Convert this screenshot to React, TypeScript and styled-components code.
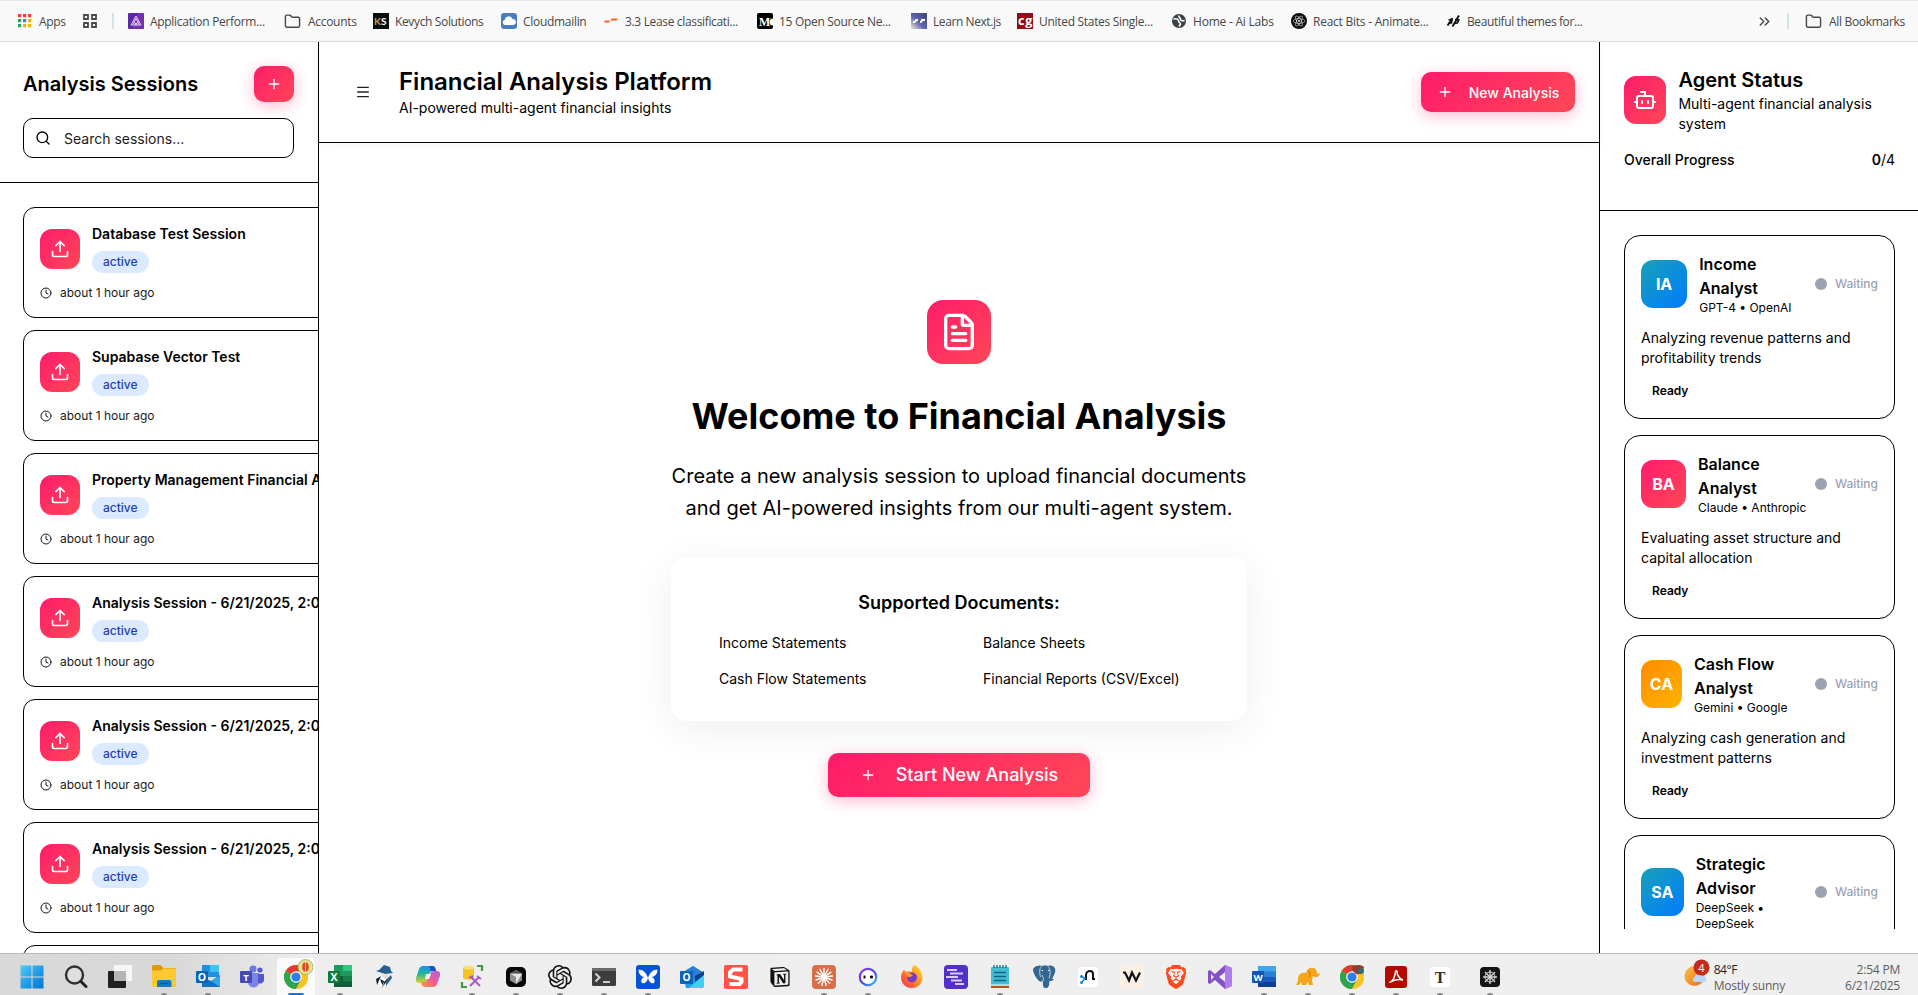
import React from 'react';
import styled, { createGlobalStyle } from 'styled-components';
import { Bot, ChevronsRight, Clock, FileText, Folder, Menu, Plus, Search, Upload } from 'lucide-react';
import { SiBrave, SiNotion, SiOpenai, SiReact } from 'react-icons/si';

const pink = 'linear-gradient(135deg, #ff1b6b 0%, #ff4757 100%)';
const blue = 'linear-gradient(135deg, #17a2b8 0%, #007bff 100%)';
const orange = 'linear-gradient(135deg, #ff8c00 0%, #ffb300 100%)';

const GlobalStyle = createGlobalStyle`
  *, *::before, *::after { box-sizing: border-box; }
  body { margin: 0; background: #fff; color: #000; font-family: Inter, sans-serif; overflow: hidden; }
  h1, h2, h3, p { margin: 0; }
  button, input { font-family: inherit; }
  svg { display: block; flex: none; }
`;

const Screen = styled.div`
  display: flex;
  flex-direction: column;
  width: 1918px;
  height: 995px;
  overflow: hidden;
`;

/* ---------- Bookmarks bar ---------- */

const BookmarksBar = styled.nav`
  display: flex;
  align-items: center;
  flex: none;
  height: 42px;
  padding: 0 13px 0 18px;
  background: #f9f9f9;
  border-top: 1px solid #e6e6e6;
  border-bottom: 1px solid #dcdcdc;
  color: #474747;
  font: 12px 'Open Sans', sans-serif;
  letter-spacing: -0.3px;
  white-space: nowrap;
`;

const Bookmark = styled.div<{ $width?: number; $gap?: number; $track?: number }>`
  display: flex;
  align-items: center;
  gap: ${(p) => p.$gap ?? 6}px;
  flex: none;
  width: ${(p) => (p.$width ? `${p.$width}px` : 'auto')};
  letter-spacing: ${(p) => p.$track ?? -0.3}px;
`;

const BarDivider = styled.span<{ $left: number; $right: number }>`
  width: 2px;
  height: 16px;
  margin: 0 ${(p) => p.$right}px 0 ${(p) => p.$left}px;
  background: #d3e3ea;
`;

const BarSpacer = styled.span`
  flex: 1;
`;

/* ---------- Page shell ---------- */

const Workspace = styled.div`
  display: flex;
  flex: 1;
  min-height: 0;
`;

const Sidebar = styled.aside`
  display: flex;
  flex-direction: column;
  flex: none;
  width: 319px;
  border-right: 1px solid #000;
  overflow: hidden;
`;

const SidebarHeader = styled.div`
  flex: none;
  padding: 24px 24px 24px 23px;
  border-bottom: 1px solid #000;
`;

const SidebarTitleRow = styled.div`
  display: flex;
  align-items: center;
  justify-content: space-between;
  margin-bottom: 16px;
`;

const PanelTitle = styled.h2`
  font-size: 20px;
  line-height: 28px;
  font-weight: 600;
`;

const GradientButton = styled.button<{ $w: number; $h: number; $size?: number; $gap?: number }>`
  display: flex;
  align-items: center;
  justify-content: center;
  gap: ${(p) => p.$gap ?? 16}px;
  width: ${(p) => p.$w}px;
  height: ${(p) => p.$h}px;
  padding: 0;
  border: 0;
  border-radius: 10px;
  background: ${pink};
  box-shadow: 0 4px 15px rgba(255, 27, 107, 0.3);
  color: #fff;
  font-size: ${(p) => p.$size ?? 14}px;
  font-weight: 500;
  white-space: nowrap;
`;

const SearchField = styled.label`
  display: flex;
  align-items: center;
  gap: 13px;
  height: 40px;
  padding: 0 11px;
  border: 1px solid #000;
  border-radius: 10px;
`;

const SearchInput = styled.input`
  flex: 1;
  min-width: 0;
  padding: 0;
  border: 0;
  outline: 0;
  background: none;
  font-size: 14px;
  &::placeholder { color: #1c1c1c; opacity: 1; }
`;

const SessionList = styled.div`
  display: flex;
  flex-direction: column;
  gap: 12px;
  flex: 1;
  min-height: 0;
  padding: 24px 0 0 23px;
  overflow: hidden;
`;

const SessionCard = styled.article`
  flex: none;
  width: 420px;
  height: 111px;
  padding: 16px;
  border: 1px solid #000;
  border-radius: 12px;
`;

const SessionTop = styled.div`
  display: flex;
  gap: 12px;
  height: 49px;
  margin-bottom: 12px;
`;

const SessionIcon = styled.span`
  display: grid;
  place-items: center;
  width: 40px;
  height: 40px;
  margin-top: 5px;
  border-radius: 12px;
  background: ${pink};
  color: #fff;
`;

const SessionInfo = styled.div`
  display: flex;
  flex-direction: column;
  align-items: flex-start;
  gap: 7px;
`;

const SessionTitle = styled.h3`
  font-size: 14px;
  line-height: 20px;
  font-weight: 600;
  white-space: nowrap;
`;

const StatusBadge = styled.span`
  display: flex;
  align-items: center;
  height: 22px;
  padding: 0 11px;
  border-radius: 11px;
  background: #dbeafe;
  color: #1e40af;
  font-size: 12px;
  line-height: 16px;
  font-weight: 500;
`;

const SessionTime = styled.div`
  display: flex;
  align-items: center;
  gap: 8px;
  font-size: 12px;
  line-height: 16px;
  color: #1a1a1a;
`;

/* ---------- Main column ---------- */

const Main = styled.main`
  display: flex;
  flex-direction: column;
  flex: 1;
  min-width: 0;
`;

const MainHeader = styled.header`
  display: flex;
  align-items: center;
  flex: none;
  height: 101px;
  padding: 0 24px;
  border-bottom: 1px solid #000;
  box-shadow: 0 2px 10px rgba(0, 0, 0, 0.05);
`;

const MenuButton = styled.button`
  display: grid;
  place-items: center;
  width: 40px;
  height: 40px;
  margin-right: 16px;
  padding: 0;
  border: 0;
  background: none;
  color: #222;
`;

const HeaderText = styled.div`
  flex: 1;
`;

const AppTitle = styled.h1`
  font-size: 24px;
  line-height: 32px;
  font-weight: 600;
`;

const SmallText = styled.p`
  font-size: 14px;
  line-height: 20px;
`;

const Welcome = styled.section`
  display: flex;
  flex-direction: column;
  align-items: center;
  justify-content: center;
  flex: 1;
`;

const HeroIcon = styled.div`
  display: grid;
  place-items: center;
  width: 64px;
  height: 64px;
  margin-bottom: 32px;
  border-radius: 16px;
  background: ${pink};
  color: #fff;
`;

const WelcomeTitle = styled.h2`
  margin-bottom: 24px;
  font-size: 36px;
  line-height: 40px;
  font-weight: 700;
`;

const WelcomeText = styled.p`
  width: 576px;
  margin-bottom: 33px;
  font-size: 20px;
  line-height: 32px;
  text-align: center;
`;

const DocumentsCard = styled.div`
  width: 576px;
  height: 164px;
  margin-bottom: 32px;
  padding: 32px 48px;
  border-radius: 16px;
  background: #fff;
  box-shadow: 0 8px 40px rgba(15, 20, 40, 0.07);
`;

const DocumentsTitle = styled.h3`
  margin-bottom: 16px;
  font-size: 18px;
  line-height: 28px;
  font-weight: 600;
  text-align: center;
`;

const DocumentsGrid = styled.div`
  display: grid;
  grid-template-columns: 216px 216px;
  gap: 16px 48px;
  font-size: 14px;
  line-height: 20px;
`;

/* ---------- Agent panel ---------- */

const AgentPanel = styled.aside`
  display: flex;
  flex-direction: column;
  flex: none;
  width: 319px;
  padding-bottom: 24px;
  border-left: 1px solid #000;
`;

const AgentHeader = styled.div`
  flex: none;
  height: 169px;
  padding: 24px 23px 0 24px;
  border-bottom: 1px solid #000;
`;

const AgentHeading = styled.div`
  display: flex;
  align-items: center;
  gap: 12.4px;
  margin-bottom: 16px;
`;

const AgentBadge = styled.span<{ $w: number; $fill: string }>`
  display: grid;
  place-items: center;
  flex: none;
  width: ${(p) => p.$w}px;
  height: 48px;
  border-radius: 12px;
  background: ${(p) => p.$fill};
  color: #fff;
  font-size: 16px;
  font-weight: 700;
`;

const ProgressRow = styled.div`
  display: flex;
  justify-content: space-between;
  font-size: 14px;
  line-height: 20px;
  font-weight: 500;
`;

const ProgressCount = styled.span`
  font-weight: 400;
  b { font-weight: 600; }
`;

const AgentList = styled.div`
  display: flex;
  flex-direction: column;
  gap: 16px;
  flex: 1;
  min-height: 0;
  padding: 24px 23px 0 24px;
  overflow: hidden;
`;

const AgentCard = styled.article`
  flex: none;
  padding: 16px;
  border: 1px solid #000;
  border-radius: 16px;
`;

const AgentTop = styled.div`
  display: flex;
  align-items: center;
  gap: 12px;
  margin-bottom: 12px;
`;

const AgentInfo = styled.div`
  flex: 1;
  min-width: 0;
`;

const AgentName = styled.h3`
  font-size: 16px;
  line-height: 24px;
  font-weight: 600;
  white-space: pre-line;
`;

const AgentModel = styled.p`
  font-size: 12px;
  line-height: 16px;
  white-space: pre;
`;

const AgentState = styled.span`
  display: flex;
  align-items: center;
  gap: 8px;
  color: #9ca3af;
  font-size: 12px;
  line-height: 16px;
  font-weight: 500;
  &::before {
    content: '';
    width: 12px;
    height: 12px;
    border-radius: 50%;
    background: #9ca3af;
  }
`;

const ReadyTag = styled.div`
  margin-top: 12px;
  padding: 0 11px;
  font-size: 12px;
  line-height: 22px;
  font-weight: 600;
`;

/* ---------- Taskbar ---------- */

const Taskbar = styled.footer`
  display: flex;
  flex: none;
  height: 42px;
  padding: 0 18px 0 10px;
  border-top: 1px solid #b9b9b9;
  background: linear-gradient(90deg, #d9d9d9 0, #d8d8d8 170px, #eeeeee 310px, #efefef 100%);
  font-family: 'Open Sans', sans-serif;
  font-size: 12px;
`;

const TaskItem = styled.div<{ $active?: boolean; $running?: boolean; $wide?: boolean }>`
  display: flex;
  flex-direction: column;
  align-items: center;
  justify-content: space-between;
  width: 38px;
  height: 38px;
  margin: 4px ${(p) => (p.$wide ? 9 : 3)}px 0 3px;
  padding-top: 7px;
  border-radius: 4px 4px 0 0;
  background: ${(p) => (p.$active ? '#fafafa' : 'transparent')};
  &::after {
    content: '';
    width: ${(p) => (p.$active ? 16 : 6)}px;
    height: 3px;
    border-radius: 2px 2px 0 0;
    background: ${(p) => (p.$active ? '#0a78d4' : p.$running ? '#8b8b8b' : 'transparent')};
  }
`;

const Weather = styled.div`
  display: flex;
  align-items: flex-start;
  gap: 4px;
  margin-left: auto;
  padding-top: 5px;
`;

const TrayText = styled.div<{ $right?: boolean; $track: number }>`
  padding-top: 3px;
  line-height: 16px;
  color: #5d5d5d;
  letter-spacing: ${(p) => p.$track}px;
  text-align: ${(p) => (p.$right ? 'right' : 'left')};
  white-space: nowrap;
`;

const Temperature = styled.div`
  color: #1f1f1f;
  letter-spacing: -0.4px;
`;

const Clockface = styled.div`
  width: 115px;
  padding-top: 5px;
`;

/* ---------- Bookmark glyphs ---------- */

const G16 = ({ children }: { children: React.ReactNode }) => (
  <svg width="16" height="16" viewBox="0 0 16 16">{children}</svg>
);

const appDots = ['#f44336', '#f44336', '#f44336', '#34a060', '#2a8cf0', '#f4b400', '#34a060', '#f4b400', '#f4b400'];

const AppsGlyph = () => (
  <svg width="14" height="14" viewBox="0 0 14 14">
    {appDots.map((c, i) => (
      <rect key={i} x={(i % 3) * 5} y={Math.floor(i / 3) * 5} width="3.2" height="3.2" fill={c} />
    ))}
  </svg>
);

const GridGlyph = () => (
  <svg width="14" height="14" viewBox="0 0 14 14" fill="none" stroke="#4a4a4a" strokeWidth="1.8">
    <path d="M1 1h4v4h-4zM9 1h4v4h-4zM1 9h4v4h-4zM9 9h4v4h-4z" />
  </svg>
);

const glyphs = {
  perf: (
    <G16>
      <rect width="16" height="16" rx="1" fill="#5b2aa0" />
      <path d="M10 0h6v16h-12z" fill="#8c35b4" opacity=".6" />
      <path d="M8 3l5 9H3zM8 5.500l3 6M8 5.500l-3 6M5.500 9l4 3M10.500 9l-4 3" fill="none" stroke="#e9ddff" strokeWidth=".9" />
    </G16>
  ),
  ks: (
    <G16>
      <rect width="16" height="16" fill="#06110f" />
      <text x="1" y="11.500" fontSize="10" fontWeight="700" fontFamily="Lato" fill="#c89b4b">K</text>
      <text x="8" y="11.500" fontSize="10" fontWeight="700" fontFamily="Lato" fill="#fff">S</text>
    </G16>
  ),
  cloud: (
    <G16>
      <rect width="16" height="16" rx="3" fill="#4a7cc0" />
      <path d="M4 12a2.700 2.700 0 0 1-.2-5.300A4 4 0 0 1 11.500 6a3 3 0 0 1 .8 6z" fill="#fff" />
    </G16>
  ),
  dash: (
    <G16>
      <path d="M1 9.500l1-2h5l-1 2zM7.500 7.500l1-2h6l-1 2z" fill="#ff5a1f" />
    </G16>
  ),
  medium: (
    <G16>
      <rect width="16" height="16" rx="2" fill="#000" />
      <text x="2" y="12.500" fontSize="12" fontWeight="700" fontFamily="Liberation Serif" fill="#fff">M</text>
      <path d="M16 5.500a3.500 3.500 0 0 0 0 7z" fill="#fff" />
    </G16>
  ),
  next: (
    <svg width="16" height="16" viewBox="0 0 16 16">
      <defs>
        <linearGradient id="nx" x1="1" y1="0" x2="0" y2="1">
          <stop offset="0" stopColor="#3a4570" />
          <stop offset=".55" stopColor="#5f63b0" />
          <stop offset="1" stopColor="#f0ead8" />
        </linearGradient>
      </defs>
      <rect width="16" height="16" fill="url(#nx)" />
      <path d="M2 9c2 0 3-1 3-2h2M9 9c2 0 2-1 2-2h3" fill="none" stroke="#fff" strokeWidth="1.800" />
    </svg>
  ),
  cg: (
    <G16>
      <rect width="16" height="16" fill="#930c18" />
      <text x="1" y="11.500" fontSize="12.500" fontWeight="700" fontFamily="Open Sans" fill="#fff" textLength="14">cg</text>
    </G16>
  ),
  globe: (
    <G16>
      <circle cx="8" cy="8" r="7" fill="#3c4043" />
      <path d="M2.500 6c3-.5 5 0 5 2s2 1 2 3l-1.500 2.500M8 2.500c-1 2 2 2 1.500 3.500S12 8 13.500 7.500" fill="none" stroke="#fff" strokeWidth="1.600" />
    </G16>
  ),
  themes: (
    <G16>
      <path d="M2.500 12.500l5-7M7.500 13.500l6.500-11" fill="none" stroke="#111" strokeWidth="1.900" />
      <path d="M3.500 7l3.500-.8-.5 3.500-3.500.8M10 6.500l3.800.5-1.500 3-3 .5" fill="none" stroke="#111" strokeWidth="1.700" />
    </G16>
  ),
};

const BitsMark = styled.span`
  display: grid;
  place-items: center;
  width: 16px;
  height: 16px;
  border-radius: 50%;
  background: #0c0c0c;
  color: #e8e8e8;
`;

const bookmarks = [
  { icon: glyphs.perf, text: 'Application Perform...', width: 156 },
  { icon: <Folder size={17} strokeWidth={2} />, text: 'Accounts', width: 89, gap: 7 },
  { icon: glyphs.ks, text: 'Kevych Solutions', width: 128, track: -0.36 },
  { icon: glyphs.cloud, text: 'Cloudmailin', width: 102 },
  { icon: glyphs.dash, text: '3.3 Lease classificati...', width: 154, track: -0.34 },
  { icon: glyphs.medium, text: '15 Open Source Ne...', width: 154 },
  { icon: glyphs.next, text: 'Learn Next.js', width: 106, track: -0.42 },
  { icon: glyphs.cg, text: 'United States Single...', width: 154 },
  { icon: glyphs.globe, text: 'Home - Ai Labs', width: 120, track: -0.22 },
  { icon: <BitsMark><SiReact size={12} /></BitsMark>, text: 'React Bits - Animate...', width: 154, track: -0.24 },
  { icon: glyphs.themes, text: 'Beautiful themes for...', width: 150, track: -0.38 },
];

/* ---------- Taskbar glyphs ---------- */

const G24 = ({ children }: { children: React.ReactNode }) => (
  <svg width="24" height="24" viewBox="0 0 24 24">{children}</svg>
);

const Letter = ({ x, y, size, fill = '#fff', font = 'Open Sans', children }: { x: number; y: number; size: number; fill?: string; font?: string; children: string }) => (
  <text x={x} y={y} fontSize={size} fontWeight="700" fontFamily={font} fill={fill} textAnchor="middle">{children}</text>
);

const ChromeMark = () => (
  <>
    <circle cx="12" cy="12" r="12" fill="#fcc31e" />
    <path d="M12 12L1.600 6A12 12 0 0 1 22.400 6z" fill="#e33b2e" />
    <path d="M12 12L1.600 6A12 12 0 0 0 12 24l5-9z" fill="#2da44f" />
    <path d="M12 6.500h10.700A12 12 0 0 1 12 24l5-9z" fill="#fcc31e" />
    <circle cx="12" cy="12" r="5.800" fill="#fff" />
    <circle cx="12" cy="12" r="4.600" fill="#2f7de9" />
  </>
);

const Rays = ({ color, n, r }: { color: string; n: number; r: number }) => (
  <g stroke={color} strokeWidth="1.400" strokeLinecap="round">
    {Array.from({ length: n }, (_, i) => (
      <path key={i} d={`M12 12V${12 - r}`} transform={`rotate(${(360 / n) * i} 12 12)`} />
    ))}
  </g>
);

type Task = { icon: React.ReactNode; running?: boolean; active?: boolean; wide?: boolean };

const tasks: Task[] = [
  {
    icon: (
      <G24>
        <defs>
          <linearGradient id="win" x1="0" y1="0" x2="1" y2="1">
            <stop offset="0" stopColor="#4ccaf8" />
            <stop offset="1" stopColor="#0074d4" />
          </linearGradient>
        </defs>
        <path d="M.5.500h11v11H.5zM12.500.500h11v11h-11zM.5 12.500h11v11H.5zM12.500 12.500h11v11h-11z" fill="url(#win)" />
      </G24>
    ),
  },
  {
    icon: (
      <G24>
        <circle cx="10.500" cy="10" r="8.500" fill="#dedede" stroke="#303030" strokeWidth="2.400" />
        <path d="M17 16.500l5 5" stroke="#222" strokeWidth="3" strokeLinecap="round" />
      </G24>
    ),
  },
  {
    icon: (
      <G24>
        <rect x="0" y="6" width="18" height="17" rx="1" fill="#202020" />
        <rect x="6" y="0" width="18" height="16" rx="1" fill="#f7f7f7" />
        <rect x="6" y="6" width="12" height="10" fill="#b5b5b5" />
      </G24>
    ),
  },
  {
    running: true,
    icon: (
      <G24>
        <path d="M0 1.500a1.500 1.500 0 0 1 1.500-1.500h7l3 3H22.500A1.500 1.500 0 0 1 24 4.500V8H0z" fill="#dc9a12" />
        <path d="M0 5.500h9l2-2h13V22H0z" fill="#fdc932" />
        <path d="M5 22v-5a2 2 0 0 1 2-2h10.500a2 2 0 0 1 2 2v5z" fill="#1279c4" />
        <path d="M8 18.500h8.500" stroke="#0a5c9c" strokeWidth="1.500" />
      </G24>
    ),
  },
  {
    running: true,
    icon: (
      <G24>
        <path d="M6 0h17v12H6z" fill="#1f91df" />
        <path d="M14 0h9v7h-9z" fill="#43c2f4" />
        <path d="M6 12l9 4 9-6v12H6z" fill="#1372c0" />
        <path d="M24 11v11l-9-6z" fill="#2fa7ea" />
        <rect x="0" y="6" width="12" height="12" rx="1" fill="#0a63b5" />
        <Letter x={6} y={16} size={10.5}>O</Letter>
      </G24>
    ),
  },
  {
    icon: (
      <G24>
        <circle cx="13" cy="4" r="3.600" fill="#7078dc" />
        <circle cx="20" cy="5" r="2.600" fill="#5059c9" />
        <path d="M7 8h12v8a5.500 5.500 0 0 1-11 2z" fill="#7b83eb" />
        <path d="M18 9h6v6.500a4 4 0 0 1-6 2.500z" fill="#5059c9" />
        <rect x="0" y="6" width="12" height="12" rx="1" fill="#444bb3" />
        <Letter x={6} y={15.5} size={9.5}>T</Letter>
      </G24>
    ),
  },
  {
    active: true,
    icon: (
      <svg width="24" height="24" viewBox="0 0 24 24" overflow="visible">
        <ChromeMark />
        <circle cx="21.500" cy="2" r="7.500" fill="#e2e58c" stroke="#a6a66a" strokeWidth=".8" />
        <ellipse cx="21.500" cy="2" rx="3.300" ry="4.800" fill="#dd4a26" />
        <path d="M21.500-3v10" stroke="#fbd0a0" strokeWidth=".8" />
      </svg>
    ),
  },
  {
    running: true,
    icon: (
      <G24>
        <rect x="6" y="0" width="18" height="22" rx="1" fill="#1f9a5c" />
        <path d="M15 0h9v6h-9z" fill="#33c481" />
        <path d="M6 11h18v11H6z" fill="#125e38" />
        <path d="M15 11h9v5.500h-9z" fill="#168049" />
        <rect x="0" y="6" width="12" height="12" rx="1" fill="#0f7a40" />
        <Letter x={6} y={16} size={10.5}>X</Letter>
      </G24>
    ),
  },
  {
    icon: (
      <G24>
        <path d="M7 5l5-5 6 2 1 4 2 2-8 1-9-3z" fill="#23608f" />
        <path d="M9 8l8 2-2 4-6-2z" fill="#e6e0d6" />
        <path d="M4 13l5-3 4 5 6-5 1 3-7 9-3 1z" fill="#fff" />
        <path d="M5 20l4-9-5 3zM10 23l9-13-8 8zM8 14l4 2-1 6z" fill="#14222c" />
        <path d="M14 17l5-7 1 3-6 8z" fill="#23608f" />
      </G24>
    ),
  },
  {
    icon: (
      <G24>
        <defs>
          <linearGradient id="cpa" x1="0" y1="0" x2="0" y2="1">
            <stop offset="0" stopColor="#1590ef" />
            <stop offset=".5" stopColor="#26b890" />
            <stop offset="1" stopColor="#f0d020" />
          </linearGradient>
          <linearGradient id="cpb" x1="1" y1="0" x2="0" y2="1">
            <stop offset="0" stopColor="#a566ee" />
            <stop offset=".5" stopColor="#f05a92" />
            <stop offset="1" stopColor="#ff9a3c" />
          </linearGradient>
        </defs>
        <path d="M7 1h9c2 0 3 1 3.500 3l.5 2h-3c-2 0-3 1-4 4l-2 5c-1 2-2 3-4 3H4c-3 0-5-1-4-5l3-9c1-2 2-3 4-3z" fill="url(#cpa)" />
        <path d="M17 22H9c-2 0-3-1-3.500-3L5 17h3c2 0 3-1 4-4l2-4c1-2 2-3 4-3h2c3 0 5 1 4 5l-3 8c-1 2-2 3-4 3z" fill="url(#cpb)" />
        <path d="M13 1h3c2 0 3 1 3.500 3l.5 2h-6c1-2 0-4-1-5z" fill="#1b4fc4" />
        <path d="M10 9h5l-2 5h-4z" fill="#f3f3f3" />
      </G24>
    ),
  },
  {
    running: true,
    icon: (
      <G24>
        <path d="M3 2v11c3 2 8 2 11 0V2z" fill="#f4c522" />
        <ellipse cx="8.500" cy="2.500" rx="5.500" ry="2" fill="#fbe07a" />
        <path d="M17 1h5v5M2 17v5h5" fill="none" stroke="#3f9a45" strokeWidth="2.200" />
        <path d="M10 21l9-9M11 12l9 9M9 13l4-2M17 11l4 3" stroke="#a95cc4" strokeWidth="2" />
      </G24>
    ),
  },
  {
    running: true,
    icon: (
      <G24>
        <rect x="2" y="2" width="20" height="20" rx="5" fill="#070707" />
        <path d="M12 5l6 3.500v7L12 19l-6-3.500v-7z" fill="#8e8e8e" />
        <path d="M6 8.500L18 8.500 12 19V12z" fill="#e8e8e8" />
        <path d="M12 5l6 3.500H6z" fill="#585858" />
      </G24>
    ),
  },
  { running: true, icon: <SiOpenai size={24} color="#111" /> },
  {
    running: true,
    icon: (
      <G24>
        <rect x="0" y="3" width="24" height="18" rx="1.500" fill="#3d3d3d" />
        <path d="M0 3h24v3H0z" fill="#6a6a6a" />
        <path d="M3.500 8.500l4 4-4 4" fill="none" stroke="#d6d6d6" strokeWidth="2" />
        <path d="M11 17h7" stroke="#f1f1f1" strokeWidth="1.600" />
      </G24>
    ),
  },
  {
    running: true,
    icon: (
      <G24>
        <rect width="24" height="24" rx="3" fill="#0754d2" />
        <path d="M12 13C10 7 6 4 2.500 5c0 4 3 7 6 7-3 1-4 4-2.500 6 3 1 5-1 6-5zM12 13c2-6 6-9 9.500-8 0 4-3 7-6 7 3 1 4 4 2.500 6-3 1-5-1-6-5z" fill="#fff" />
      </G24>
    ),
  },
  {
    icon: (
      <G24>
        <path d="M2 8l11-7 11 7v12a3 3 0 0 1-3 3H6z" fill="#1aa0e8" />
        <path d="M5 6l8-5 11 7-8 8z" fill="#2b7fd6" />
        <path d="M15 11l9-5v4l-9 7z" fill="#0c3f8c" />
        <path d="M24 10v10a3 3 0 0 1-3 3H9z" fill="#3fd0f2" />
        <rect x="0" y="6" width="13" height="13" rx="1" fill="#0d64bd" />
        <Letter x={6.5} y={16} size={10}>O</Letter>
      </G24>
    ),
  },
  {
    icon: (
      <G24>
        <rect width="24" height="24" rx="2" fill="#ff5346" />
        <path d="M18.500 4.500H9l-3 3v4l11.500 2.500v3l-2 2H5.500" fill="none" stroke="#fff" strokeWidth="4" />
      </G24>
    ),
  },
  { icon: <SiNotion size={20} color="#111" style={{ margin: '2px 0' }} /> },
  {
    running: true,
    icon: (
      <G24>
        <rect width="24" height="24" rx="4" fill="#d9704c" />
        <Rays color="#fff" n={13} r={8.5} />
      </G24>
    ),
  },
  {
    running: true,
    icon: (
      <G24>
        <defs>
          <linearGradient id="ring" x1="0" y1="0" x2="1" y2="1">
            <stop offset="0" stopColor="#9a35ee" />
            <stop offset=".5" stopColor="#4a45e8" />
            <stop offset="1" stopColor="#38c4f0" />
          </linearGradient>
        </defs>
        <circle cx="12" cy="12" r="8.200" fill="#fff" stroke="url(#ring)" strokeWidth="2.200" />
        <path d="M8.500 10.500v3M14 12h3M15.500 10.500v3" stroke="#111" strokeWidth="2" />
      </G24>
    ),
  },
  {
    icon: (
      <G24>
        <defs>
          <linearGradient id="fx" x1="1" y1="0" x2="0" y2="1">
            <stop offset="0" stopColor="#ffe226" />
            <stop offset=".5" stopColor="#ff8a1c" />
            <stop offset="1" stopColor="#f0255e" />
          </linearGradient>
        </defs>
        <path d="M14 0c4 2 6 4 7 7 4 8-1 16-9 16C5 23 1 18 1 12c0-3 1-5 3-7l2 2c2-1 5-1 6 0 0-3 0-5 2-7z" fill="url(#fx)" />
        <circle cx="12" cy="12.500" r="5" fill="#7a3ac8" />
        <path d="M5 8c3-1 5 1 8 2-2 2-3 2-5 2z" fill="#ff9a2c" />
      </G24>
    ),
  },
  {
    icon: (
      <G24>
        <rect width="24" height="24" rx="4" fill="#5230c8" />
        <path d="M3 5h10M6 8.500h13M2 12h12M7 15.500h11M11 19h9" stroke="#d8ccff" strokeWidth="2" />
      </G24>
    ),
  },
  {
    running: true,
    icon: (
      <G24>
        <rect x="3" y="2" width="18" height="21" rx="1" fill="#42bcd6" />
        <path d="M3 20h18v3H3z" fill="#a65a16" />
        <path d="M3 19.500h18v1.200H3z" fill="#fff" />
        <path d="M6 0v3M9 0v3M12 0v3M15 0v3M18 0v3" stroke="#14647c" strokeWidth="1.300" />
        <path d="M6 7.500h12M6 11.500h12M6 15.500h12" stroke="#14647c" strokeWidth="1.500" />
      </G24>
    ),
  },
  {
    icon: (
      <G24>
        <path d="M5 1c2-1 4-.5 5 0 2-.6 4-.6 6 0 3-1 6 0 7 2.500 1 3-1 7-3 10.500l2 .5c-1 1.500-3 1.500-4.500 1.500-.5 3 0 6.500-3 7-2.500.5-3.500-1-3.500-3l-.3-4.500c-1 .8-1.700 1.500-2.700 1C5 15 1 8 1 4.500 1 3 3 1.500 5 1z" fill="#336791" />
        <path d="M9.500 1.500C7 4 7.500 8 8.500 12M16 1.500c3 3 2.500 8 1 12M11 16c1-2 0-4-1-6" fill="none" stroke="#dfe8ef" strokeWidth=".8" />
        <path d="M9.500 5.500h1.500M16 5.500h1.300" stroke="#fff" strokeWidth="1" />
      </G24>
    ),
  },
  {
    icon: (
      <G24>
        <rect x="2" y="2" width="20" height="20" rx="4" fill="#fff" />
        <path d="M10 15V10a4 4 0 0 1 4-4h0a3 3 0 0 1 3 3v5h2" fill="none" stroke="#111" strokeWidth="2" />
        <path d="M5 11l4 2.500L5 18" fill="none" stroke="#1687ee" strokeWidth="1.600" />
        <circle cx="5.500" cy="11.500" r="1.500" fill="#1687ee" />
        <circle cx="5.500" cy="17.500" r="1.500" fill="#1687ee" />
      </G24>
    ),
  },
  {
    icon: (
      <G24>
        <rect width="24" height="24" rx="2" fill="#faf0e6" />
        <path d="M3 7.500h2l4 8 3-8 4 8 4-8" fill="none" stroke="#111" strokeWidth="2.200" />
      </G24>
    ),
  },
  { icon: <SiBrave size={24} color="#fb4a1c" /> },
  {
    icon: (
      <G24>
        <path d="M17 0l7 3v18l-7 3L7 15l-5 4-2-1V6l2-1 5 4zM17 7l-6 5 6 5zM3 9v6l3-3z" fill="#8550c4" fillRule="evenodd" />
        <path d="M17 0l7 3v18l-7 3z" fill="#b07cec" />
      </G24>
    ),
  },
  {
    running: true,
    icon: (
      <G24>
        <path d="M6 1h18v6H6z" fill="#41a5ee" />
        <path d="M6 6.500h18V12H6z" fill="#2b7cd3" />
        <path d="M6 12h18v5H6z" fill="#185abd" />
        <path d="M6 17h18v5H6z" fill="#103f91" />
        <rect x="0" y="6" width="12" height="12" rx="1" fill="#1554b0" />
        <Letter x={6} y={15.5} size={9.5}>W</Letter>
      </G24>
    ),
  },
  {
    running: true,
    icon: (
      <G24>
        <path d="M2 14c0-5 4-7 8-6 1-4 4-6 7-5 3 0 4 3 4 6l3-1-1 3c-3 2-5 1-6 0l-1 4 1 5h-4l-1-3-2 3H6l-1-3-2 3H0l2-4z" fill="#f7a51c" />
        <path d="M12 6c2 0 3 3 1 6" fill="none" stroke="#d97b0c" strokeWidth="1.200" />
      </G24>
    ),
  },
  {
    running: true,
    icon: (
      <G24>
        <ChromeMark />
        <path d="M12 2c3-2 8-3 12 0-1 5-4 8-8 7l-3-3z" fill="#8a3f30" />
        <circle cx="21" cy="6" r="3" fill="#37686a" />
      </G24>
    ),
  },
  {
    running: true,
    icon: (
      <G24>
        <rect x="1" y="1" width="22" height="22" rx="3" fill="#b30b00" />
        <path d="M5.500 17.500c3-1 6-6 6-11 0-1 1.500-1 1.500 0 0 4 3 8 6 8.500-3-1-9-.5-13.500 2.500z" fill="none" stroke="#fff" strokeWidth="1.500" />
      </G24>
    ),
  },
  {
    running: true,
    icon: (
      <G24>
        <rect x="2" y="2" width="20" height="20" rx="3" fill="#fff" />
        <Letter x={12} y={17.5} size={16} fill="#2e2e2e" font="Liberation Serif">T</Letter>
      </G24>
    ),
    wide: true,
  },
  {
    running: true,
    icon: (
      <G24>
        <rect x="2" y="2" width="20" height="20" rx="4" fill="#141414" />
        <circle cx="12" cy="12" r="5" fill="none" stroke="#ddd" strokeWidth=".9" />
        <Rays color="#d8d8d8" n={8} r={6.5} />
      </G24>
    ),
  },
];

const WeatherGlyph = () => (
  <svg width="26" height="28" viewBox="0 0 26 28">
    <defs>
      <linearGradient id="sun" x1="0" y1="0" x2="1" y2="1">
        <stop offset="0" stopColor="#f8c544" />
        <stop offset="1" stopColor="#ee6a14" />
      </linearGradient>
    </defs>
    <circle cx="10.500" cy="17" r="10" fill="url(#sun)" />
    <path d="M10 23a3 3 0 0 1 .5-5 4.500 4.500 0 0 1 8-1 3.200 3.200 0 0 1 2 6z" fill="#bcd4f6" />
    <circle cx="17.500" cy="8.500" r="8" fill="#c42b1c" />
    <text x="17.500" y="12.500" fontSize="11" fontFamily="Open Sans" fill="#fff" textAnchor="middle">4</text>
  </svg>
);

/* ---------- Data ---------- */

const sessions = [
  'Database Test Session',
  'Supabase Vector Test',
  'Property Management Financial Analysis',
  'Analysis Session - 6/21/2025, 2:04:12 PM',
  'Analysis Session - 6/21/2025, 2:03:48 PM',
  'Analysis Session - 6/21/2025, 2:01:30 PM',
  'Analysis Session - 6/21/2025, 2:00:57 PM',
];

const agents = [
  { code: 'IA', w: 46.2, fill: blue, name: 'Income\nAnalyst', model: 'GPT-4 • OpenAI', task: 'Analyzing revenue patterns and profitability trends' },
  { code: 'BA', w: 45, fill: pink, name: 'Balance\nAnalyst', model: 'Claude • Anthropic', task: 'Evaluating asset structure and capital allocation' },
  { code: 'CA', w: 41, fill: orange, name: 'Cash Flow\nAnalyst', model: 'Gemini • Google', task: 'Analyzing cash generation and investment patterns' },
  { code: 'SA', w: 42.7, fill: blue, name: 'Strategic\nAdvisor', model: 'DeepSeek •\nDeepSeek', task: 'Synthesizing insights and recommendations' },
];

export default function App() {
  return (
    <Screen>
      <GlobalStyle />
      <BookmarksBar>
        <Bookmark $width={65} $gap={7}><AppsGlyph />Apps</Bookmark>
        <GridGlyph />
        <BarDivider $left={15} $right={14} />
        {bookmarks.map((b) => (
          <Bookmark key={b.text} $width={b.width} $gap={b.gap} $track={b.track}>{b.icon}{b.text}</Bookmark>
        ))}
        <BarSpacer />
        <ChevronsRight size={17} />
        <BarDivider $left={14} $right={16} />
        <Bookmark $gap={7}><Folder size={17} />All Bookmarks</Bookmark>
      </BookmarksBar>

      <Workspace>
        <Sidebar>
          <SidebarHeader>
            <SidebarTitleRow>
              <PanelTitle>Analysis Sessions</PanelTitle>
              <GradientButton $w={40} $h={36} aria-label="Add session"><Plus size={16} /></GradientButton>
            </SidebarTitleRow>
            <SearchField>
              <Search size={16} />
              <SearchInput placeholder="Search sessions..." />
            </SearchField>
          </SidebarHeader>
          <SessionList>
            {sessions.map((title) => (
              <SessionCard key={title}>
                <SessionTop>
                  <SessionIcon><Upload size={20} /></SessionIcon>
                  <SessionInfo>
                    <SessionTitle>{title}</SessionTitle>
                    <StatusBadge>active</StatusBadge>
                  </SessionInfo>
                </SessionTop>
                <SessionTime><Clock size={12} />about 1 hour ago</SessionTime>
              </SessionCard>
            ))}
          </SessionList>
        </Sidebar>

        <Main>
          <MainHeader>
            <MenuButton aria-label="Toggle menu"><Menu size={16} /></MenuButton>
            <HeaderText>
              <AppTitle>Financial Analysis Platform</AppTitle>
              <SmallText>AI-powered multi-agent financial insights</SmallText>
            </HeaderText>
            <GradientButton $w={154} $h={40}><Plus size={16} />New Analysis</GradientButton>
          </MainHeader>
          <Welcome>
            <HeroIcon><FileText size={40} /></HeroIcon>
            <WelcomeTitle>Welcome to Financial Analysis</WelcomeTitle>
            <WelcomeText>
              Create a new analysis session to upload financial documents and get AI-powered insights from our multi-agent system.
            </WelcomeText>
            <DocumentsCard>
              <DocumentsTitle>Supported Documents:</DocumentsTitle>
              <DocumentsGrid>
                <span>Income Statements</span>
                <span>Balance Sheets</span>
                <span>Cash Flow Statements</span>
                <span>Financial Reports (CSV/Excel)</span>
              </DocumentsGrid>
            </DocumentsCard>
            <GradientButton $w={262} $h={44} $size={18} $gap={20}><Plus size={16} />Start New Analysis</GradientButton>
          </Welcome>
        </Main>

        <AgentPanel>
          <AgentHeader>
            <AgentHeading>
              <AgentBadge $w={42} $fill={pink}><Bot size={24} /></AgentBadge>
              <div>
                <PanelTitle>Agent Status</PanelTitle>
                <SmallText>Multi-agent financial analysis system</SmallText>
              </div>
            </AgentHeading>
            <ProgressRow>
              Overall Progress
              <ProgressCount><b>0</b>/4</ProgressCount>
            </ProgressRow>
          </AgentHeader>
          <AgentList>
            {agents.map((a) => (
              <AgentCard key={a.code}>
                <AgentTop>
                  <AgentBadge $w={a.w} $fill={a.fill}>{a.code}</AgentBadge>
                  <AgentInfo>
                    <AgentName>{a.name}</AgentName>
                    <AgentModel>{a.model}</AgentModel>
                  </AgentInfo>
                  <AgentState>Waiting</AgentState>
                </AgentTop>
                <SmallText>{a.task}</SmallText>
                <ReadyTag>Ready</ReadyTag>
              </AgentCard>
            ))}
          </AgentList>
        </AgentPanel>
      </Workspace>

      <Taskbar>
        {tasks.map((t, i) => (
          <TaskItem key={i} $active={t.active} $running={t.running} $wide={t.wide}>{t.icon}</TaskItem>
        ))}
        <Weather>
          <WeatherGlyph />
          <TrayText $track={-0.22}>
            <Temperature>84°F</Temperature>
            Mostly sunny
          </TrayText>
        </Weather>
        <Clockface>
          <TrayText $right $track={-0.2}>
            2:54 PM<br />6/21/2025
          </TrayText>
        </Clockface>
      </Taskbar>
    </Screen>
  );
}
